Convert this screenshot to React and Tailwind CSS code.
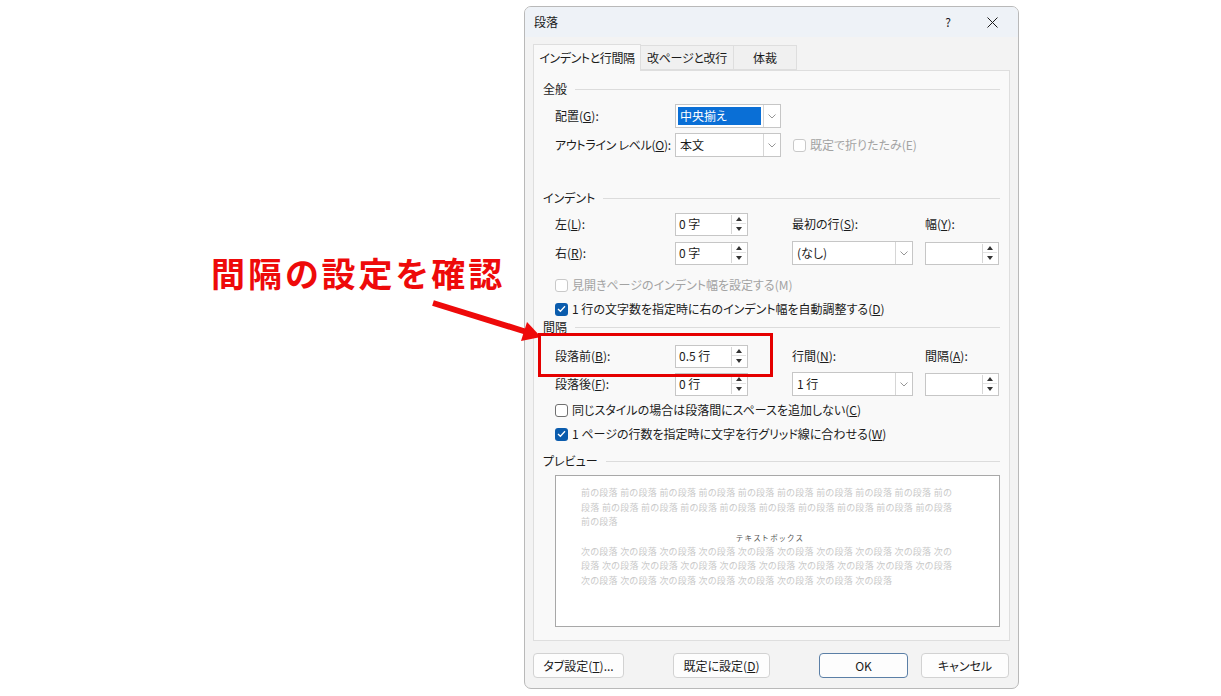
import React from "react";

const F = "font-['Noto_Sans_CJK_JP',sans-serif] [font-feature-settings:'palt']";

function Section({ label, className = "" }) {
  return (
    <div className={`flex items-center h-[16px] pl-[9px] pr-[9px] ${className}`}>
      <span className="text-[12px] text-[#1b1b1b] leading-none whitespace-nowrap">{label}</span>
      <div className="flex-1 h-px bg-[#dcdcdc] ml-[8px]" />
    </div>
  );
}

function Chevron() {
  return (
    <svg width="8" height="5" viewBox="0 0 8 5">
      <path d="M0.5 0.5 L4 4 L7.5 0.5" fill="none" stroke="#8a8a8a" strokeWidth="0.9" />
    </svg>
  );
}

function Select({ value, w, highlight = false, h = 24 }) {
  return (
    <div className={`flex bg-white border border-[#c6c6c6] ${w}`} style={{ height: h }}>
      <div className="flex-1 flex items-center px-[2px]">
        {highlight ? (
          <div className="w-full h-[18px] bg-[#0a6fd6] text-white text-[12px] flex items-center pl-[2px] leading-none">
            {value}
          </div>
        ) : (
          <span className="text-[12px] text-[#1b1b1b] pl-[2px] leading-none">{value}</span>
        )}
      </div>
      <div className="w-[17px] border-l border-[#d6d6d6] flex items-center justify-center">
        <Chevron />
      </div>
    </div>
  );
}

function Spinner({ value = "", w = "w-[73px]" }) {
  return (
    <div className={`flex h-[23px] bg-white border border-[#c6c6c6] ${w}`}>
      <div className="flex-1 flex items-center pl-[3px] text-[12px] text-[#1b1b1b] leading-none">{value}</div>
      <div className="w-[15px] flex flex-col items-center justify-center gap-[1px] my-[1px] mr-[1px] border-l border-[#d6d6d6]">
        <div className="flex-1 w-full flex items-center justify-center border-b border-[#e2e2e2]">
          <svg width="6" height="4" viewBox="0 0 6 4"><path d="M0 4 L3 0 L6 4 Z" fill="#333" /></svg>
        </div>
        <div className="flex-1 w-full flex items-center justify-center">
          <svg width="6" height="4" viewBox="0 0 6 4"><path d="M0 0 L3 4 L6 0 Z" fill="#333" /></svg>
        </div>
      </div>
    </div>
  );
}

function Checkbox({ checked = false, disabled = false }) {
  if (checked) {
    return (
      <div className="w-[13px] h-[13px] rounded-[3px] bg-[#0b5cad] flex items-center justify-center shrink-0">
        <svg width="9" height="8" viewBox="0 0 9 8">
          <path d="M1 4 L3.4 6.3 L8 1.3" fill="none" stroke="white" strokeWidth="1.3" />
        </svg>
      </div>
    );
  }
  return (
    <div
      className={`w-[13px] h-[13px] rounded-[3px] border shrink-0 bg-white ${
        disabled ? "border-[#c9c9c9]" : "border-[#707070]"
      }`}
    />
  );
}

function CheckRow({ checked, disabled, children, className = "" }) {
  return (
    <div className={`flex items-center h-[16px] pl-[21px] gap-[4px] ${className}`}>
      <Checkbox checked={checked} disabled={disabled} />
      <span className={`text-[12px] leading-none whitespace-nowrap ${disabled ? "text-[#a3a3a3]" : "text-[#1b1b1b]"}`}>
        {children}
      </span>
    </div>
  );
}

function Label({ children, w }) {
  return <div className={`${w} shrink-0 text-[12px] text-[#1b1b1b] leading-none whitespace-nowrap`}>{children}</div>;
}

function Button({ children, w, primary = false }) {
  return (
    <div
      className={`h-[25px] ${w} rounded-[4px] bg-[#fdfdfd] border flex items-center justify-center text-[12px] text-[#1b1b1b] leading-none ${
        primary ? "border-[#5b7fa6]" : "border-[#d2d2d2]"
      }`}
    >
      {children}
    </div>
  );
}

const rep = (s, n) => Array.from({ length: n }, () => s).join(" ");

function Preview() {
  const prev = [rep("前の段落", 9) + " 前の", "段落 " + rep("前の段落", 9), "前の段落"];
  const next = [rep("次の段落", 9) + " 次の", "段落 " + rep("次の段落", 9), rep("次の段落", 8)];
  return (
    <div className="ml-[21px] mr-[9px] mt-[6px] h-[152px] bg-white border border-[#a8a8a8] pt-[10px] pl-[25px]">
      <div className="text-[9px] text-[#c9c9c9] leading-[14.5px] tracking-[0.3px] whitespace-pre">
        {prev.map((l, i) => (
          <div key={i}>{l}</div>
        ))}
      </div>
      <div className="text-[7.5px] text-[#555] leading-[14px] tracking-[2px] whitespace-pre pl-[155px] pt-[1px]">テキストボックス</div>
      <div className="text-[9px] text-[#c9c9c9] leading-[14.5px] tracking-[0.3px] whitespace-pre">
        {next.map((l, i) => (
          <div key={i}>{l}</div>
        ))}
      </div>
    </div>
  );
}

export default function App() {
  return (
    <div className={`relative w-[1221px] h-[696px] bg-white overflow-hidden ${F}`}>
      {/* Dialog */}
      <div className="ml-[524px] mt-[6px] w-[495px] h-[683px] rounded-[7px] border border-[#b9b9b9] bg-[#f3f3f3] flex flex-col overflow-hidden">
        {/* Title bar */}
        <div className="h-[30px] bg-[#eef2f7] flex items-center shrink-0">
          <span className="ml-[9px] text-[12px] text-[#1b1b1b] leading-none">段落</span>
          <div className="flex-1" />
          <span className="text-[12px] text-[#1b1b1b] mr-[36px] leading-none">?</span>
          <svg width="11" height="11" viewBox="0 0 11 11" className="mr-[20px]">
            <path d="M0.5 0.5 L10.5 10.5 M10.5 0.5 L0.5 10.5" stroke="#1b1b1b" strokeWidth="1" />
          </svg>
        </div>
        {/* Tabs */}
        <div className="flex items-end h-[33px] pl-[8px] shrink-0">
          <div className="h-[27px] w-[108px] bg-[#f9f9f9] border border-b-0 border-[#dedede] flex items-center justify-center text-[12px] tracking-[-0.4px] text-[#1b1b1b] leading-none relative top-px z-10">
            インデントと行間隔
          </div>
          <div className="h-[25px] w-[93px] bg-[#f0f0f0] border border-l-0 border-[#dedede] flex items-center justify-center text-[12px] tracking-[-0.3px] text-[#1b1b1b] leading-none">
            改ページと改行
          </div>
          <div className="h-[25px] w-[63px] bg-[#f0f0f0] border border-l-0 border-[#dedede] flex items-center justify-center text-[12px] text-[#1b1b1b] leading-none">
            体裁
          </div>
        </div>
        {/* Panel */}
        <div className="ml-[8px] w-[477px] h-[571px] bg-[#f9f9f9] border border-[#dedede] flex flex-col shrink-0">
          <Section label="全般" className="mt-[10px]" />
          <div className="flex items-center h-[24px] mt-[7px] pl-[21px]">
            <Label w="w-[120px]">
              配置(<u>G</u>):
            </Label>
            <Select value="中央揃え" w="w-[106px]" highlight />
          </div>
          <div className="flex items-center h-[24px] mt-[5px] pl-[21px]">
            <Label w="w-[120px]">
              <span className="tracking-[-0.3px]">
                アウトライン レベル(<u>O</u>):
              </span>
            </Label>
            <Select value="本文" w="w-[106px]" />
            <div className="flex items-center ml-[12px] gap-[4px]">
              <Checkbox disabled />
              <span className="text-[12px] text-[#a3a3a3] leading-none">既定で折りたたみ(E)</span>
            </div>
          </div>

          <Section label="インデント" className="mt-[33px]" />
          <div className="flex items-center h-[22px] mt-[7px] pl-[21px]">
            <Label w="w-[120px]">
              左(<u>L</u>):
            </Label>
            <div className="w-[117px] shrink-0">
              <Spinner value="0 字" />
            </div>
            <Label w="w-[133px]">
              最初の行(<u>S</u>):
            </Label>
            <Label w="w-[60px]">
              幅(<u>Y</u>):
            </Label>
          </div>
          <div className="flex items-center h-[24px] mt-[6px] pl-[21px]">
            <Label w="w-[120px]">
              右(<u>R</u>):
            </Label>
            <div className="w-[117px] shrink-0">
              <Spinner value="0 字" />
            </div>
            <div className="w-[133px] shrink-0">
              <Select value="(なし)" w="w-[121px]" />
            </div>
            <Spinner w="w-[74px]" />
          </div>
          <CheckRow disabled className="mt-[12px]">
            見開きページのインデント幅を設定する(M)
          </CheckRow>
          <CheckRow checked className="mt-[8px]">
            1 行の文字数を指定時に右のインデント幅を自動調整する(<u>D</u>)
          </CheckRow>

          <Section label="間隔" className="mt-[2px]" />
          <div className="flex items-center h-[22px] mt-[10px] pl-[21px]">
            <Label w="w-[120px]">
              段落前(<u>B</u>):
            </Label>
            <div className="w-[117px] shrink-0">
              <Spinner value="0.5 行" />
            </div>
            <Label w="w-[133px]">
              行間(<u>N</u>):
            </Label>
            <Label w="w-[60px]">
              間隔(<u>A</u>):
            </Label>
          </div>
          <div className="flex items-center h-[24px] mt-[5px] pl-[21px]">
            <Label w="w-[120px]">
              段落後(<u>F</u>):
            </Label>
            <div className="w-[117px] shrink-0">
              <Spinner value="0 行" />
            </div>
            <div className="w-[133px] shrink-0">
              <Select value="1 行" w="w-[121px]" />
            </div>
            <Spinner w="w-[74px]" />
          </div>
          <CheckRow className="mt-[6px]">
            同じスタイルの場合は段落間にスペースを追加しない(<u>C</u>)
          </CheckRow>
          <CheckRow checked className="mt-[8px]">
            1 ページの行数を指定時に文字を行グリッド線に合わせる(<u>W</u>)
          </CheckRow>

          <Section label="プレビュー" className="mt-[11px]" />
          <Preview />
        </div>
        {/* Buttons */}
        <div className="flex items-center mt-[12px] pl-[8px] shrink-0">
          <Button w="w-[91px]">
            タブ設定(<u>T</u>)...
          </Button>
          <div className="w-[49px]" />
          <Button w="w-[97px]">
            既定に設定(<u>D</u>)
          </Button>
          <div className="w-[49px]" />
          <Button w="w-[89px]" primary>
            OK
          </Button>
          <div className="w-[13px]" />
          <Button w="w-[88px]">キャンセル</Button>
        </div>
      </div>

      {/* Annotation overlay */}
      <div className="absolute left-[211px] top-[253px] text-[34px] font-bold text-[#ee0a0a] tracking-[3px] leading-[40px] whitespace-nowrap">
        間隔の設定を確認
      </div>
      <svg className="absolute left-0 top-0 pointer-events-none" width="1221" height="696">
        <line x1="433" y1="303" x2="525" y2="331.5" stroke="#ee0a0a" strokeWidth="6" />
        <polygon points="541,337 521,341 527,322" fill="#ee0a0a" />
      </svg>
      <div className="absolute left-[538px] top-[333px] w-[235px] h-[44px] border-[3px] border-[#e50000]" />
    </div>
  );
}
